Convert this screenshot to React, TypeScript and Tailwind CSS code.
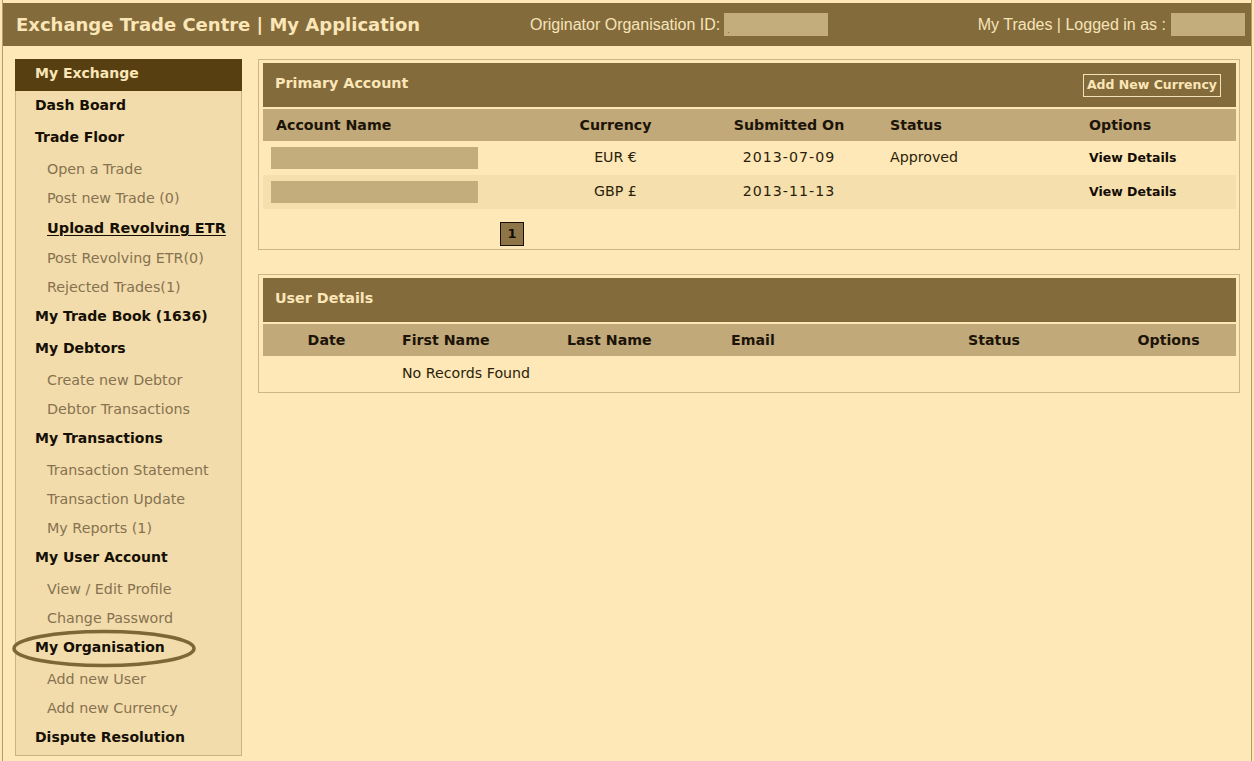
import React from "react";

type NavItem = { label: string; kind: "top" | "sub" | "active" };

const navItems: NavItem[] = [
  { label: "Dash Board", kind: "top" },
  { label: "Trade Floor", kind: "top" },
  { label: "Open a Trade", kind: "sub" },
  { label: "Post new Trade (0)", kind: "sub" },
  { label: "Upload Revolving ETR", kind: "active" },
  { label: "Post Revolving ETR(0)", kind: "sub" },
  { label: "Rejected Trades(1)", kind: "sub" },
  { label: "My Trade Book (1636)", kind: "top" },
  { label: "My Debtors", kind: "top" },
  { label: "Create new Debtor", kind: "sub" },
  { label: "Debtor Transactions", kind: "sub" },
  { label: "My Transactions", kind: "top" },
  { label: "Transaction Statement", kind: "sub" },
  { label: "Transaction Update", kind: "sub" },
  { label: "My Reports (1)", kind: "sub" },
  { label: "My User Account", kind: "top" },
  { label: "View / Edit Profile", kind: "sub" },
  { label: "Change Password", kind: "sub" },
  { label: "My Organisation", kind: "top" },
  { label: "Add new User", kind: "sub" },
  { label: "Add new Currency", kind: "sub" },
  { label: "Dispute Resolution", kind: "top" },
];

const accounts = [
  { currency: "EUR €", date: "2013-07-09", status: "Approved" },
  { currency: "GBP £", date: "2013-11-13", status: "" },
];

function Sidebar() {
  return (
    <div className="w-[227px] self-start border-x border-b border-[#C8B387] bg-[#F2DCAB]">
      <div className="-mx-px h-[32px] bg-[#573F12] pl-[20px] text-[14px] font-bold leading-[28px] text-[#FBE6B8]">
        My Exchange
      </div>
      {navItems.map((item) => {
        if (item.kind === "top") {
          return (
            <div key={item.label} className="h-[32px] pl-[19px] text-[14px] font-bold leading-[28px] text-[#150F05]">
              {item.label}
            </div>
          );
        }
        if (item.kind === "active") {
          return (
            <div key={item.label} className="h-[31px] pl-[31px] text-[14.5px] font-bold leading-[30px] text-[#150F05] underline underline-offset-2">
              {item.label}
            </div>
          );
        }
        return (
          <div key={item.label} className="h-[29px] pl-[31px] text-[14.3px] leading-[29px] text-[#867250]">
            {item.label}
          </div>
        );
      })}
    </div>
  );
}

function PanelTitle({ title, children }: { title: string; children?: React.ReactNode }) {
  return (
    <div className="flex h-[44px] items-center justify-between bg-[#836B3B] pl-[12px] pr-[15px]">
      <span className="-mt-[2px] text-[14.3px] font-bold text-[#FBE6B8]">{title}</span>
      {children}
    </div>
  );
}

function PrimaryAccount() {
  return (
    <div className="border border-[#CBB68A] pt-[3px] pl-[4px] pr-[3px] pb-[3px]">
      <PanelTitle title="Primary Account">
        <button className="h-[23px] border border-[#F3E2B8] px-[3px] text-[12.5px] font-bold leading-[20px] text-[#FBE6B8]">
          Add New Currency
        </button>
      </PanelTitle>
      <table className="mt-[2px] w-[973px] table-fixed border-collapse text-[14.2px]">
        <colgroup>
          <col className="w-[268px]" />
          <col className="w-[169px]" />
          <col className="w-[178px]" />
          <col className="w-[199px]" />
          <col className="w-[159px]" />
        </colgroup>
        <thead>
          <tr className="h-[32px] bg-[#C1A979] font-bold text-[#1C1408]">
            <th className="pl-[13px] pt-[2px] text-left">Account Name</th>
            <th className="pt-[2px] text-center">Currency</th>
            <th className="pt-[2px] text-center">Submitted On</th>
            <th className="pl-[12px] pt-[2px] text-left">Status</th>
            <th className="pl-[12px] pt-[2px] text-left">Options</th>
          </tr>
        </thead>
        <tbody className="text-[#2A1E0A]">
          {accounts.map((a, i) => (
            <tr key={a.date} className={i % 2 === 1 ? "h-[34px] bg-[#F5DFAD]" : "h-[34px]"}>
              <td className="pl-[8px]">
                <div className="h-[22px] w-[207px] bg-[#C4AD7D]" />
              </td>
              <td className="text-center">{a.currency}</td>
              <td className="text-center tracking-[1px]">{a.date}</td>
              <td className="pl-[12px]">{a.status}</td>
              <td className="pl-[12px] text-[12.5px] font-bold text-[#120C04]">View Details</td>
            </tr>
          ))}
        </tbody>
      </table>
      <div className="mt-[13px] ml-[237px] flex h-[24px] w-[24px] items-center justify-center border border-[#1A1208] bg-[#8D7548] text-[13px] font-bold text-[#120C04]">
        1
      </div>
    </div>
  );
}

function UserDetails() {
  return (
    <div className="mt-[24px] border border-[#CBB68A] pt-[3px] pl-[4px] pr-[3px] pb-[3px]">
      <PanelTitle title="User Details" />
      <table className="mt-[2px] w-[973px] table-fixed border-collapse text-[14.2px]">
        <colgroup>
          <col className="w-[127px]" />
          <col className="w-[165px]" />
          <col className="w-[165px]" />
          <col className="w-[167px]" />
          <col className="w-[214px]" />
          <col className="w-[135px]" />
        </colgroup>
        <thead>
          <tr className="h-[32px] bg-[#C1A979] font-bold text-[#1C1408]">
            <th className="pt-[2px] text-center">Date</th>
            <th className="pl-[12px] pt-[2px] text-left">First Name</th>
            <th className="pl-[12px] pt-[2px] text-left">Last Name</th>
            <th className="pl-[11px] pt-[2px] text-left">Email</th>
            <th className="pt-[2px] text-center">Status</th>
            <th className="pt-[2px] text-center">Options</th>
          </tr>
        </thead>
        <tbody className="text-[#2A1E0A]">
          <tr className="h-[33px]">
            <td />
            <td colSpan={5} className="pl-[12px] pt-[2px]">No Records Found</td>
          </tr>
        </tbody>
      </table>
    </div>
  );
}

export default function App() {
  return (
    <div className="relative h-[761px] w-[1254px] overflow-hidden bg-[#FFE8B8] font-['DejaVu_Sans',sans-serif]">
      <div className="mx-[2px] h-full border-x border-[#B59D6B] pt-[3px]">
        <header className="flex h-[43px] items-center bg-[#836B3B] pl-[13px] pr-[6px]">
          <div className="w-[514px] text-[18px] font-bold text-[#FBE6B8]">Exchange Trade Centre | My Application</div>
          <div className="flex items-center font-['Liberation_Sans',sans-serif] text-[16px] text-[#F6E4BA]">
            <span>Originator Organisation ID:</span>
            <span className="ml-[4px] flex h-[23px] w-[104px] items-end bg-[#C4AD7D] pl-[3px] text-[9px] leading-[12px] text-[#6b5a38]">.</span>
          </div>
          <div className="ml-auto flex items-center font-['Liberation_Sans',sans-serif] text-[16px] text-[#F6E4BA]">
            <span>My Trades | Logged in as :</span>
            <span className="ml-[5px] h-[23px] w-[74px] bg-[#C4AD7D]" />
          </div>
        </header>
        <div className="flex pt-[13px]">
          <div className="ml-[12px]">
            <Sidebar />
          </div>
          <main className="ml-[16px] w-[982px]">
            <PrimaryAccount />
            <UserDetails />
          </main>
        </div>
      </div>
      <svg className="pointer-events-none absolute left-[10px] top-[628px]" width="188" height="42" viewBox="0 0 188 42">
        <ellipse cx="94" cy="20.5" rx="90" ry="17" fill="none" stroke="#7D6637" strokeWidth="3.5" />
      </svg>
    </div>
  );
}
